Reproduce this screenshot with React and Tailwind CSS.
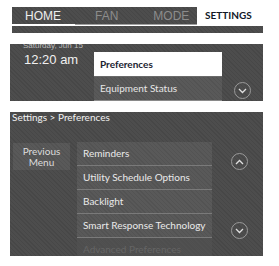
import React from "react";

const tex =
  "bg-[repeating-linear-gradient(45deg,#474747_0px,#474747_1px,#4d4d4d_1px,#4d4d4d_3px)]";
const texLight =
  "bg-[repeating-linear-gradient(45deg,#535353_0px,#535353_1px,#595959_1px,#595959_3px)]";

function Chevron({ up }) {
  return (
    <div className="w-[17px] h-[17px] rounded-full border border-[#9a9a9a] flex items-center justify-center">
      <svg width="9" height="6" viewBox="0 0 9 6">
        <path
          d={up ? "M1 5 L4.5 1.5 L8 5" : "M1 1 L4.5 4.5 L8 1"}
          fill="none"
          stroke="#e0e0e0"
          strokeWidth="1.3"
        />
      </svg>
    </div>
  );
}

export default function App() {
  const font = { fontFamily: "Lato, 'Liberation Sans', Arial, sans-serif" };
  const tabFont = { fontFamily: "'Liberation Sans', Arial, sans-serif" };
  const rows = [
    "Reminders",
    "Utility Schedule Options",
    "Backlight",
    "Smart Response Technology",
  ];
  return (
    <div className="w-[279px] h-[266px] bg-white overflow-hidden" style={font}>
      {/* Section 1: tabs */}
      <div className="ml-[12px] mt-[7px] w-[251px]">
        <div className="flex h-[17px]">
          <div
            className={`w-[185px] flex items-center text-[12px] leading-none ${tex}`}
            style={tabFont}
          >
            <span className="ml-[13px] text-[#eeeeee]">HOME</span>
            <span className="ml-[34px] text-[#8c8c8c]">FAN</span>
            <span className="ml-[35px] text-[#8c8c8c]">MODE</span>
          </div>
          <div className="flex-1 flex items-center">
            <span className="ml-[8px] text-[10px] font-bold text-[#111827]">
              SETTINGS
            </span>
          </div>
        </div>
        <div className="flex h-[1px]">
          <div className="w-[63px] bg-white" />
          <div className="w-[122px] bg-[#a0a0a0]" />
        </div>
        <div className={`mt-[1px] h-[7px] ${tex}`} />
      </div>

      {/* Section 2: home screen */}
      <div className={`ml-[10px] mt-[11px] w-[253px] h-[57px] flex ${tex}`}>
        <div className="w-[84px] relative overflow-hidden" style={tabFont}>
          <div className="absolute left-[13px] top-[-3px] text-[8px] leading-[10px] text-[#bdbdbd]">
            Saturday, Jun 15
          </div>
          <div className="mt-[9px] ml-[14px] text-[13px] text-[#f0f0f0] leading-none">
            12:20 am
          </div>
        </div>
        <div className="w-[128px] flex flex-col">
          <div className="h-[8px]" />
          <div className="h-[24px] bg-white flex items-center pl-[6px] text-[10px] font-bold text-[#1b2330]">
            Preferences
          </div>
          <div className="h-[1px] bg-[#6a6a6a]" />
          <div className={`h-[23px] flex items-center pl-[6px] text-[10px] text-[#e6e6e6] ${texLight}`}>
            Equipment Status
          </div>
          <div className="h-[1px] bg-[#8a8a8a]" />
        </div>
        <div className="flex-1 flex justify-center items-end pb-[2px]">
          <Chevron />
        </div>
      </div>

      {/* Section 3: settings > preferences */}
      <div className={`ml-[10px] mt-[11px] w-[253px] h-[144px] flex flex-col overflow-hidden ${tex}`}>
        <div className="h-[13px] flex items-center pl-[2px] text-[10px] text-[#f2f2f2] leading-none">
          Settings &gt; Preferences
        </div>
        <div className="h-[2px] bg-[#707070]" />
        <div className="flex flex-1 mt-[20px]">
          <div className="w-[67px] pl-[3px]">
            <div className={`w-[57px] h-[27px] mt-[1px] flex flex-col items-center justify-center text-[10px] leading-[11px] text-[#dcdcdc] ${texLight}`}>
              <span>Previous</span>
              <span>Menu</span>
            </div>
          </div>
          <div className="w-[135px] flex flex-col">
            {rows.map((r) => (
              <div key={r}>
                <div className={`h-[23px] flex items-center pl-[6px] text-[10px] text-[#eaeaea] ${texLight}`}>
                  {r}
                </div>
                <div className="h-[1px] bg-[#7a7a7a]" />
              </div>
            ))}
            <div className={`h-[23px] flex items-center pl-[6px] text-[10px] text-[#8a8a8a] opacity-40 ${texLight}`}>
              Advanced Preferences
            </div>
          </div>
          <div className="flex-1 flex flex-col items-center">
            <div className="mt-[11px] ml-[3px]">
              <Chevron up />
            </div>
            <div className="mt-[52px] ml-[3px]">
              <Chevron />
            </div>
          </div>
        </div>
      </div>
    </div>
  );
}
